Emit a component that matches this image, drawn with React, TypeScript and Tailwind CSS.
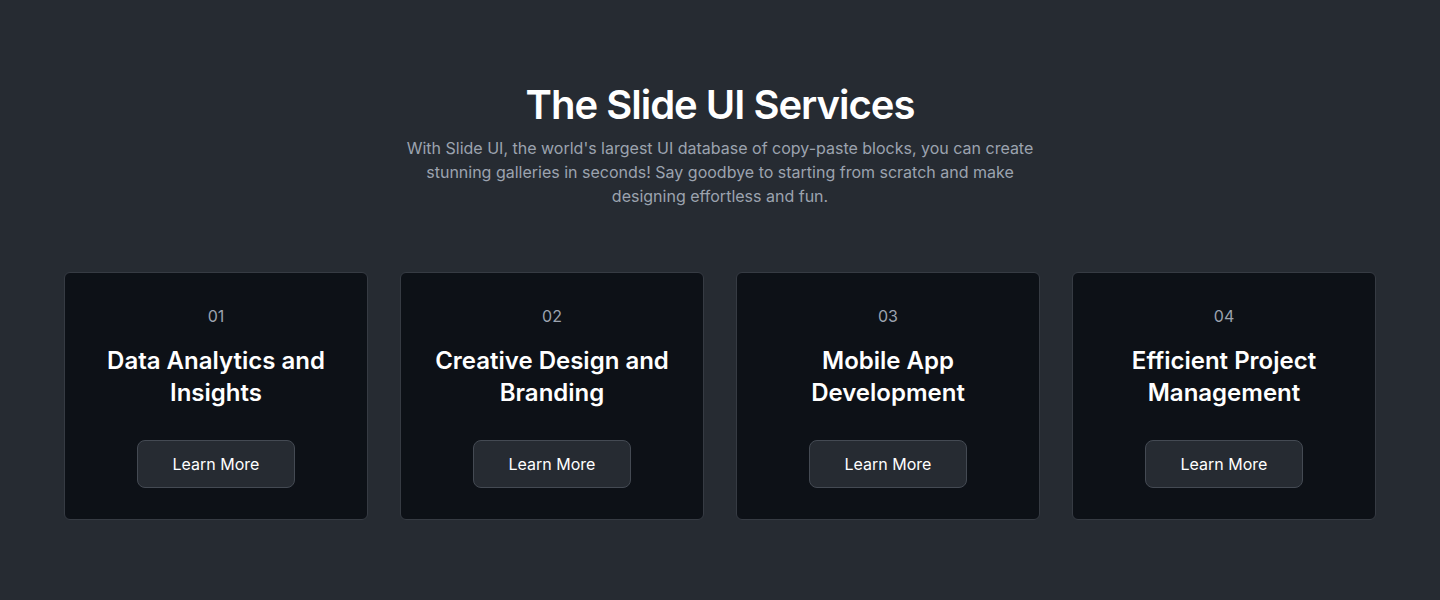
import React from "react";

const services = [
  { n: "01", title: "Data Analytics and Insights" },
  { n: "02", title: "Creative Design and Branding" },
  { n: "03", title: "Mobile App Development" },
  { n: "04", title: "Efficient Project Management" },
];

export default function App() {
  return (
    <div
      className="min-h-[600px] w-full bg-[#262b32] px-16 pt-[81px] pb-20"
      style={{ fontFamily: "Inter, 'Noto Sans', sans-serif" }}
    >
      <div className="flex flex-col items-center text-center">
        <h2 className="text-[40px] leading-[48px] font-semibold tracking-[-0.025em] text-white">
          The Slide UI Services
        </h2>
        <p className="mt-[7px] max-w-[640px] text-base leading-6 text-[#9ca3af]">
          With Slide UI, the world's largest UI database of copy-paste blocks, you can create
          stunning galleries in seconds! Say goodbye to starting from scratch and make designing
          effortless and fun.
        </p>
      </div>
      <div className="mt-16 grid grid-cols-4 gap-8">
        {services.map((s) => (
          <div
            key={s.n}
            className="flex flex-col items-center rounded-md border border-[#363b43] bg-[#0d1117] p-[31px] text-center"
          >
            <span className="text-base leading-6 text-[#9ca3af]">{s.n}</span>
            <h3 className="mt-[17px] text-2xl leading-8 font-semibold text-white">{s.title}</h3>
            <button className="mt-[31px] flex h-12 items-center rounded-lg border border-[#444a53] bg-[#262b32] px-[35px] text-base leading-6 text-white">
              Learn More
            </button>
          </div>
        ))}
      </div>
    </div>
  );
}
